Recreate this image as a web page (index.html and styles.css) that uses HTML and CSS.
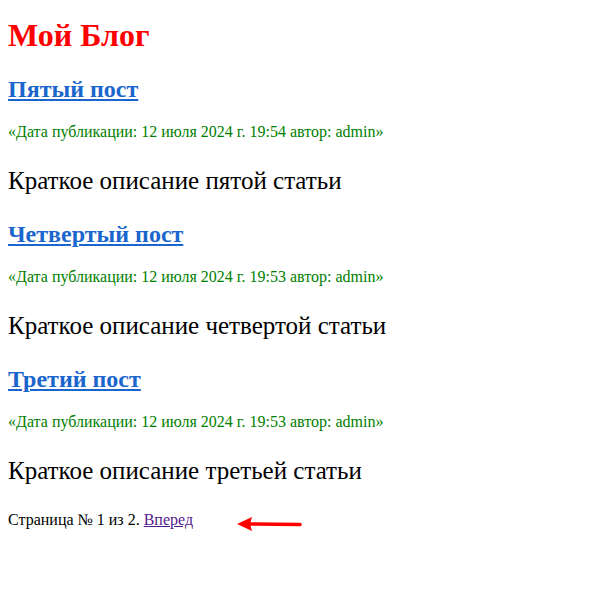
FILE: index.html
```html
<!DOCTYPE html>
<html lang="ru">
<head>
<meta charset="utf-8">
<title>Мой Блог</title>
<link rel="stylesheet" href="styles.css">
</head>
<body>
<h1 class="site-title">Мой Блог</h1>
<div class="post">
  <h2 class="post-title"><a href="#">Пятый пост</a></h2>
  <p class="post-meta">«Дата публикации: 12 июля 2024 г. 19:54 автор: admin»</p>
  <p class="post-desc">Краткое описание пятой статьи</p>
</div>
<div class="post">
  <h2 class="post-title"><a href="#">Четвертый пост</a></h2>
  <p class="post-meta">«Дата публикации: 12 июля 2024 г. 19:53 автор: admin»</p>
  <p class="post-desc">Краткое описание четвертой статьи</p>
</div>
<div class="post">
  <h2 class="post-title"><a href="#">Третий пост</a></h2>
  <p class="post-meta">«Дата публикации: 12 июля 2024 г. 19:53 автор: admin»</p>
  <p class="post-desc">Краткое описание третьей статьи</p>
</div>
<div class="pagination">
  <span>Страница № 1 из 2. <a class="next" href="#">Вперед</a></span>
  <svg class="arrow" width="70" height="16" viewBox="0 0 70 16">
    <path d="M14 8 L65 8.5" stroke="#f00" stroke-width="3.5" stroke-linecap="round" fill="none"/>
    <path d="M2 8 L17 1 L15 8 L17 15 Z" fill="#f00"/>
  </svg>
</div>
</body>
</html>
```
FILE: styles.css
```css
body {
  margin: 8px;
  font-family: "Liberation Serif", "Times New Roman", serif;
  color: #000;
  background: #fff;
}
.site-title {
  color: #ff0000;
  font-size: 32px;
  margin: 9px 0 22px;
}
.post-title {
  font-size: 24px;
  margin: 20px 0;
}
.post-title a {
  color: #1a66cc;
}
.post-meta {
  color: #008000;
  font-size: 16px;
  margin: 16px 0;
}
.post-desc {
  font-size: 25px;
  margin: 26px 0;
}
.pagination {
  position: relative;
  font-size: 16px;
  margin: 16px 0;
}
.pagination .next {
  color: #551a8b;
}
.arrow {
  position: absolute;
  left: 227px;
  top: 5px;
}
```
